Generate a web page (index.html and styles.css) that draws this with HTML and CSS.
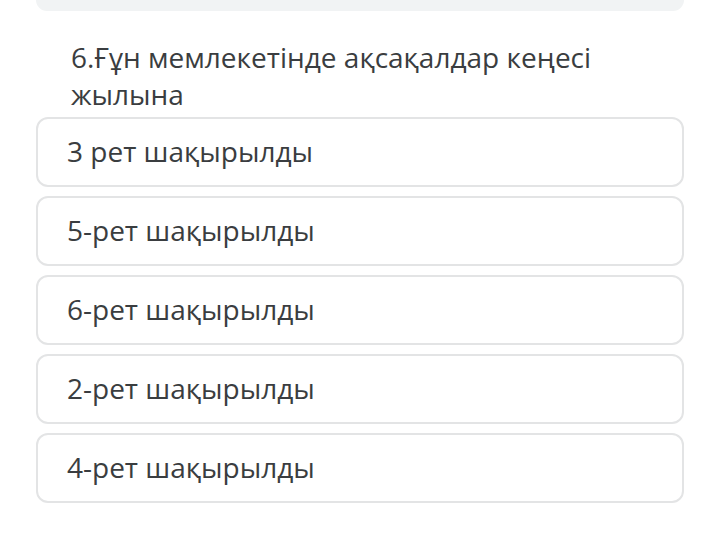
FILE: index.html
```html
<!DOCTYPE html>
<html lang="kk">
<head>
    <meta charset="UTF-8">
    <meta name="viewport" content="width=device-width, initial-scale=1.0">
    <title>Тест</title>
    <link rel="stylesheet" href="styles.css">
</head>
<body>
    <main class="quiz">
        <div class="prev-card"></div>
        <h2 class="question">6.Ғұн мемлекетінде ақсақалдар кеңесі жылына</h2>
        <ul class="options">
            <li class="option">3 рет шақырылды</li>
            <li class="option">5-рет шақырылды</li>
            <li class="option">6-рет шақырылды</li>
            <li class="option">2-рет шақырылды</li>
            <li class="option">4-рет шақырылды</li>
        </ul>
    </main>
</body>
</html>
```

FILE: styles.css
```css
:root {
    --text-color: #3a3d40;
    --border-color: #e3e4e5;
    --muted-bg: #f1f3f4;
}
body {
    font-family: "Open Sans", "Noto Sans", sans-serif;
    background-color: #fff;
    color: var(--text-color);
    margin: 0;
}
.quiz {
    padding: 0 36px;
}
.prev-card {
    height: 11px;
    background-color: var(--muted-bg);
    border-radius: 0 0 12px 12px;
}
.question {
    margin: 28px 0 4px 0;
    padding: 0 60px 0 35px;
    font-size: 28px;
    font-weight: 400;
    line-height: 37px;
}
.options {
    list-style: none;
    margin: 0;
    padding: 0;
    display: flex;
    flex-direction: column;
    gap: 9px;
}
.option {
    box-sizing: border-box;
    height: 70px;
    display: flex;
    align-items: center;
    padding: 0 0 3px 29px;
    border: 2px solid var(--border-color);
    border-radius: 12px;
    font-size: 28px;
}
```
